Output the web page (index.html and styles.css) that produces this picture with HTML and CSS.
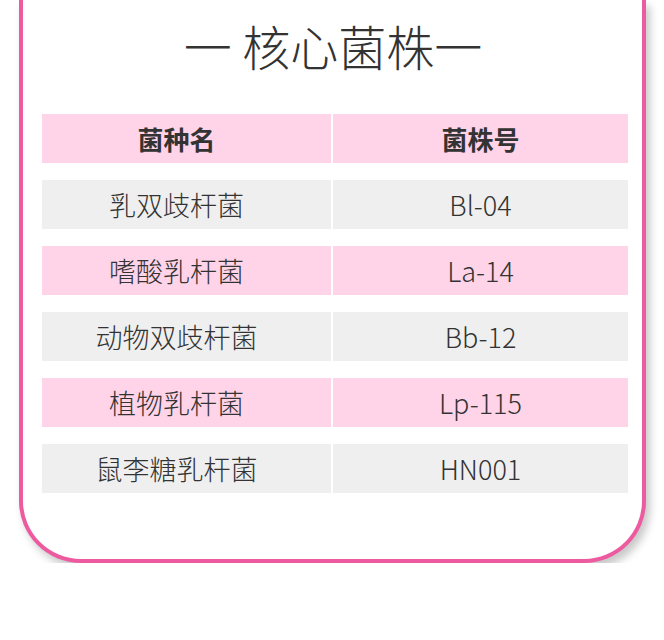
FILE: index.html
```html
<!DOCTYPE html>
<html lang="zh">
<head>
<meta charset="utf-8">
<link rel="stylesheet" href="styles.css">
</head>
<body>
<div class="card">
  <h1 class="title">一 核心菌株一</h1>
  <table class="strains">
    <thead>
      <tr class="pink"><th class="c1">菌种名</th><th class="c2">菌株号</th></tr>
    </thead>
    <tbody>
      <tr class="gray"><td class="c1">乳双歧杆菌</td><td class="c2">Bl-04</td></tr>
      <tr class="pink"><td class="c1">嗜酸乳杆菌</td><td class="c2">La-14</td></tr>
      <tr class="gray"><td class="c1">动物双歧杆菌</td><td class="c2">Bb-12</td></tr>
      <tr class="pink"><td class="c1">植物乳杆菌</td><td class="c2">Lp-115</td></tr>
      <tr class="gray"><td class="c1">鼠李糖乳杆菌</td><td class="c2">HN001</td></tr>
    </tbody>
  </table>
</div>
</body>
</html>
```

FILE: styles.css
```css
html, body {
  margin: 0;
  padding: 0;
  background: #ffffff;
}
body {
  font-family: "Noto Sans CJK SC", "Noto Sans", sans-serif;
  color: #333333;
}
.card {
  box-sizing: border-box;
  margin-left: 19px;
  width: 627px;
  border: 4px solid #ee5a9f;
  border-top: none;
  border-radius: 0 0 62px 62px;
  background: #ffffff;
  padding: 15px 14px 49px 19px;
  box-shadow: 4px 6px 8px rgba(0, 0, 0, 0.22);
}
.title {
  margin: 0 0 22px 0;
  padding-right: 4px;
  height: 60px;
  line-height: 60px;
  font-size: 48px;
  font-weight: 300;
  text-align: center;
  color: #333333;
}
.strains {
  border-collapse: separate;
  border-spacing: 2px 17px;
  margin: 0 -2px;
  width: 590px;
}
.strains th, .strains td {
  height: 49px;
  padding: 0;
  text-align: center;
  font-size: 27px;
  line-height: 49px;
}
.strains th {
  font-weight: 700;
  font-size: 26px;
}
.strains td {
  font-weight: 300;
  color: #333333;
}
.c1 {
  width: 289px;
  padding-right: 20px !important;
  box-sizing: border-box;
}
.c2 {
  width: 295px;
}
.pink th, .pink td {
  background: #ffd3e8;
}
.gray td {
  background: #efefef;
}
```
